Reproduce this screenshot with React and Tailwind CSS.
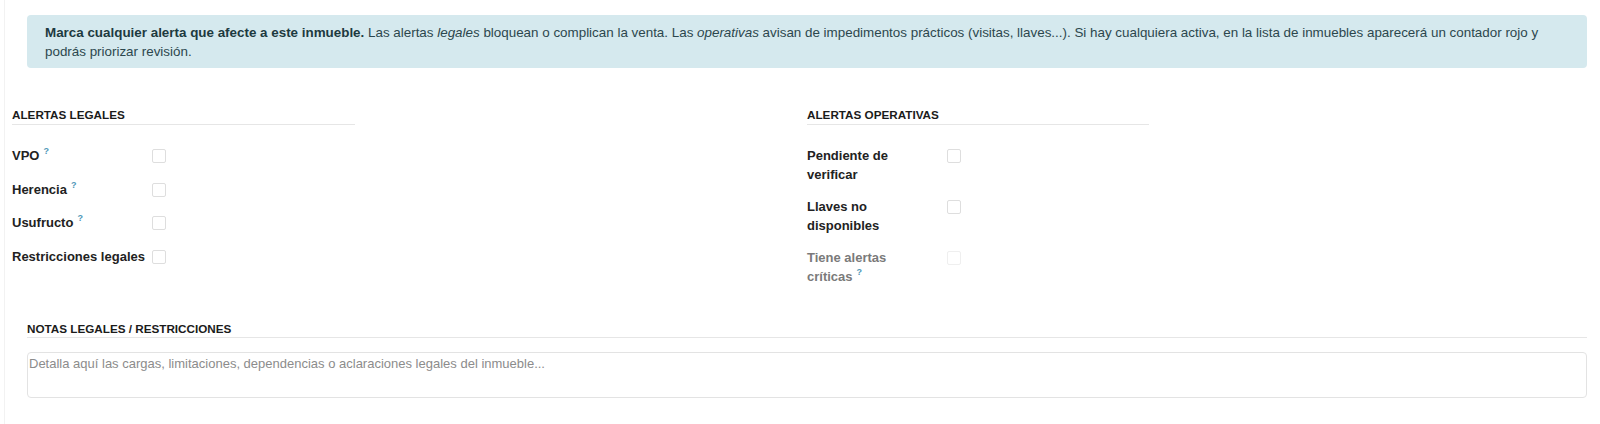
import React, { useState } from 'react';

const legalAlerts = [
  { key: 'vpo', label: 'VPO', help: true },
  { key: 'herencia', label: 'Herencia', help: true },
  { key: 'usufructo', label: 'Usufructo', help: true },
  { key: 'restricciones', label: 'Restricciones legales', help: false },
];

const operativeAlerts = [
  { key: 'pendiente', label: 'Pendiente de verificar' },
  { key: 'llaves', label: 'Llaves no disponibles' },
  { key: 'criticas', label: 'Tiene alertas críticas', help: true, disabled: true },
];

const HelpMark = () => (
  <span className="relative -top-[6px] ml-[4px] inline-block text-[9px] font-bold leading-none text-[#4f97b8]">?</span>
);

const Checkbox = ({ checked, disabled, onChange }) => (
  <button
    type="button"
    disabled={disabled}
    onClick={onChange}
    className={`mt-[3px] h-[14px] w-[14px] shrink-0 rounded-[2px] border bg-white ${
      disabled ? 'border-[#efefef]' : 'border-[#dedede]'
    } ${checked ? 'bg-[#3b82c4]' : ''}`}
  />
);

const SectionTitle = ({ children, className = '' }) => (
  <h3
    className={`border-b border-[#e6e6e6] text-[11.7px] font-bold uppercase leading-[16px] text-[#1b1b1b] ${className}`}
  >
    {children}
  </h3>
);

const App = () => {
  const [checked, setChecked] = useState({});
  const [notes, setNotes] = useState('');

  const toggle = (key) => setChecked({ ...checked, [key]: !checked[key] });

  return (
    <div className="min-h-[424px] bg-white font-['Liberation_Sans',Arial,sans-serif] text-[13px]">
      <div className="ml-[4px] min-h-[424px] border-l border-[#f2f2f2] pt-[15px] pr-[13px]">
        <div className="ml-[22px] rounded-[4px] bg-[#d5e9ee] pl-[18px] pr-[16px] pt-[8px] pb-[7px] text-[13.4px] leading-[19px] text-[#2c474d]">
          <strong className="font-bold text-[#1d3a40]">Marca cualquier alerta que afecte a este inmueble.</strong>{' '}
          Las alertas <em>legales</em> bloquean o complican la venta. Las <em>operativas</em> avisan de
          impedimentos prácticos (visitas, llaves...). Si hay cualquiera activa, en la lista de inmuebles
          aparecerá un contador rojo y podrás priorizar revisión.
        </div>

        <div className="ml-[7px] mt-[39px] grid grid-cols-[795px_1fr]">
          <div>
            <SectionTitle className="w-[343px] pb-[1px]">Alertas legales</SectionTitle>
            <div className="mt-[14px]">
              {legalAlerts.map((a) => (
                <div key={a.key} className="flex min-h-[33.5px] items-start py-[7px]">
                  <label className="w-[140px] whitespace-nowrap pr-[8px] font-semibold leading-[19px] text-[#222]">
                    {a.label}
                    {a.help && <HelpMark />}
                  </label>
                  <Checkbox checked={checked[a.key]} onChange={() => toggle(a.key)} />
                </div>
              ))}
            </div>
          </div>

          <div>
            <SectionTitle className="w-[342px] pb-[1px]">Alertas operativas</SectionTitle>
            <div className="mt-[14px]">
              {operativeAlerts.map((a) => (
                <div key={a.key} className="flex items-start py-[6.5px]">
                  <label
                    className={`w-[140px] pr-[22px] font-semibold leading-[19px] ${
                      a.disabled ? 'text-[#7a7a7a]' : 'text-[#222]'
                    }`}
                  >
                    {a.label}
                    {a.help && <HelpMark />}
                  </label>
                  <Checkbox
                    checked={checked[a.key]}
                    disabled={a.disabled}
                    onChange={() => toggle(a.key)}
                  />
                </div>
              ))}
            </div>
          </div>
        </div>

        <div className="ml-[22px] mt-[29px]">
          <SectionTitle className="pb-0">Notas legales / Restricciones</SectionTitle>
          <textarea
            value={notes}
            onChange={(e) => setNotes(e.target.value)}
            placeholder="Detalla aquí las cargas, limitaciones, dependencias o aclaraciones legales del inmueble..."
            className="mt-[14px] block h-[46px] w-full resize-none rounded-[4px] border border-[#e3e3e3] px-[1px] pt-[2px] text-[13px] leading-[18px] text-[#333] outline-none placeholder:text-[#8c8c8c]"
          />
        </div>
      </div>
    </div>
  );
};

export default App;
